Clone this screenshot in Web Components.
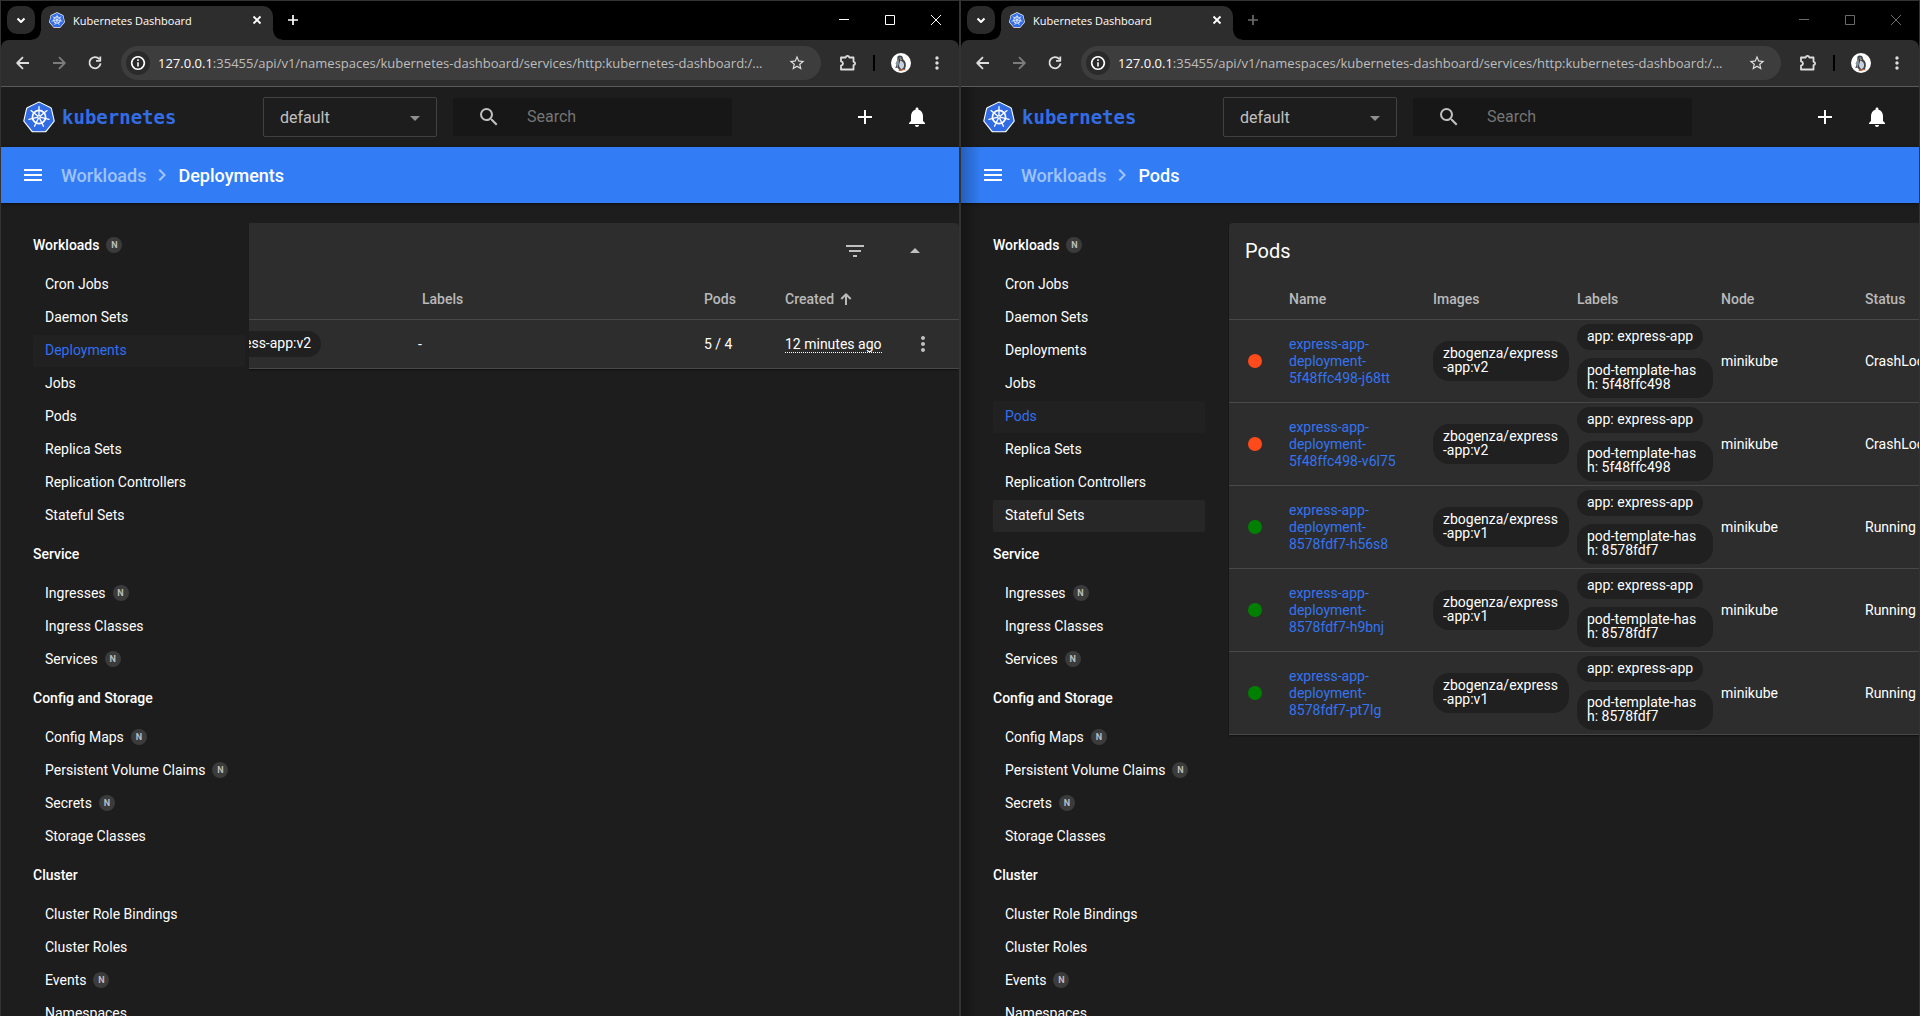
<!DOCTYPE html>
<html lang="en">
<head>
<meta charset="utf-8">
<title>Kubernetes Dashboard</title>
<style>
html, body { margin: 0; height: 100%; }
body { display: flex; overflow: hidden; background: #1d1d1d; font: 14px/20px Roboto, "Liberation Sans", sans-serif; color: #fff; }
browser-window { flex: 1 1 0; min-width: 0; }
</style>
</head>
<body>
<browser-window active>
  <kd-app page="Deployments"></kd-app>
</browser-window>
<browser-window class="behind">
  <kd-app page="Pods" hovered="Stateful Sets"></kd-app>
</browser-window>

<script>
const ICONS = {
  menu: 'M3 18h18v-2H3v2zm0-5h18v-2H3v2zm0-7v2h18V6H3z',
  chevron: 'M10 6L8.59 7.41 13.17 12l-4.58 4.59L10 18l6-6z',
  search: 'M15.5 14h-.79l-.28-.27A6.471 6.471 0 0 0 16 9.5 6.5 6.5 0 1 0 9.5 16c1.61 0 3.09-.59 4.23-1.57l.27.28v.79l5 4.99L20.49 19l-4.99-5zm-6 0C7.01 14 5 11.99 5 9.5S7.01 5 9.5 5 14 7.01 14 9.5 11.99 14 9.5 14z',
  add: 'M19 13h-6v6h-2v-6H5v-2h6V5h2v6h6v2z',
  bell: 'M12 22c1.1 0 2-.9 2-2h-4c0 1.1.89 2 2 2zm6-6v-5c0-3.07-1.64-5.64-4.5-6.32V4c0-.83-.67-1.5-1.5-1.5s-1.500.67-1.500 1.500v.68C7.63 5.360 6 7.920 6 11v5l-2 2v1h16v-1l-2-2z',
  filter: 'M10 18h4v-2h-4v2zM3 6v2h18V6H3zm3 7h12v-2H6v2z',
  up: 'M7 14l5-5 5 5z',
  down: 'M7 10l5 5 5-5z',
  more: 'M12 8c1.1 0 2-.9 2-2s-.9-2-2-2-2 .9-2 2 .9 2 2 2zm0 2c-1.100 0-2 .9-2 2s.9 2 2 2 2-.9 2-2-.9-2-2-2zm0 6c-1.100 0-2 .9-2 2s.9 2 2 2 2-.9 2-2-.9-2-2-2z',
  star: 'M22 9.24l-7.190-.620L12 2 9.190 8.630 2 9.240l5.460 4.730L5.820 21 12 17.270 18.180 21l-1.630-7.030L22 9.240zM12 15.400l-3.760 2.270 1-4.280-3.320-2.880 4.380-.380L12 6.100l1.710 4.040 4.380.380-3.320 2.880 1 4.280L12 15.400z'
};
const STROKES = {
  back: 'M18 12H6.500M12 6.200L6.200 12l5.800 5.800',
  forward: 'M6 12h11.500M12 6.200l5.800 5.800-5.800 5.800',
  reload: 'M16.400 8.200A5.600 5.600 0 1 0 17.600 12.400M17.300 5.500v4.300h-4.300',
  close: 'M8.500 8.500l7 7M15.500 8.500l-7 7',
  plus: 'M12 7v10M7 12h10',
  caret: 'M8.500 10.500l3.500 3.500 3.500-3.500',
  info: 'M12 11.200v4.300M12 8.300v1.700M12 5.700a6.300 6.300 0 1 0 .010 0z',
  puzzle: 'M5 6.500h4.800q.2-1.600 1.700-1.600t1.700 1.600h4.300v4.300q1.600.2 1.600 1.700t-1.600 1.700V18.500H5v-3.800q2-.5 2-2.200T5 10.300z',
  sort: 'M12 18V7.500M7.300 12L12 7.300l4.700 4.700'
};

const define = (name, markup, setup) => {
  const tpl = document.createElement('template');
  tpl.innerHTML = markup;
  customElements.define(name, class extends HTMLElement {
    connectedCallback() {
      if (this.shadowRoot) return;
      this.attachShadow({ mode: 'open' }).append(tpl.content.cloneNode(true));
      if (setup) setup.call(this, this.shadowRoot);
    }
  });
};

define('ui-icon', `
<style>:host { display: inline-flex; flex: none; width: 24px; height: 24px; } svg { width: 100%; height: 100%; display: block; }</style>
<svg viewBox="0 0 24 24" aria-hidden="true"><path/></svg>`, function (root) {
  const n = this.getAttribute('name'), p = root.querySelector('path');
  if (ICONS[n]) { p.setAttribute('d', ICONS[n]); p.setAttribute('fill', 'currentColor'); }
  else {
    p.setAttribute('d', STROKES[n]); p.setAttribute('fill', 'none'); p.setAttribute('stroke', 'currentColor');
    p.setAttribute('stroke-width', this.getAttribute('weight') || 1.8); p.setAttribute('stroke-linejoin', 'round');
  }
});

define('kube-logo', `
<style>:host { display: inline-flex; flex: none; width: 32px; height: 32px; } svg { width: 100%; height: 100%; }</style>
<svg viewBox="-16 -16 32 32" aria-hidden="true">
  <polygon class="edge" fill="#fff" stroke="#fff" stroke-width="3" stroke-linejoin="round"/>
  <polygon class="body" fill="#326ce5" stroke="#326ce5" stroke-width="3" stroke-linejoin="round"/>
  <circle r="6.600" fill="none" stroke="#fff" stroke-width="1.700"/>
  <g class="spokes" stroke="#fff" stroke-width="1.300" stroke-linecap="round"></g>
  <circle r="1.900" fill="#fff"/><circle r=".8" fill="#326ce5"/>
</svg>`, function (root) {
  const pt = (r, k) => { const a = k * 2 * Math.PI / 7 - Math.PI / 2; return [(r * Math.cos(a)).toFixed(2), (r * Math.sin(a) + .6).toFixed(2)]; };
  const poly = r => [0, 1, 2, 3, 4, 5, 6].map(k => pt(r, k).join()).join(' ');
  root.querySelector('.edge').setAttribute('points', poly(14.6));
  root.querySelector('.body').setAttribute('points', poly(13.4));
  root.querySelector('.spokes').innerHTML = [0, 1, 2, 3, 4, 5, 6].map(k => {
    const a = pt(2, k), b = pt(10.3, k);
    return `<path d="M${a[0]} ${a[1] - .6}L${b[0]} ${b[1] - .6}"/>`;
  }).join('');
});

define('user-avatar', `
<style>:host { display: inline-flex; width: 20px; height: 20px; } svg { width: 100%; height: 100%; }</style>
<svg viewBox="0 0 20 20" aria-hidden="true">
  <circle cx="10" cy="10" r="10" fill="#fff"/>
  <path d="M6.500 3.500q2.500-2 5 .2l.8 2.800q3 2 2.500 6.500l-1 4H8.500l-2.200-2.500-2 .8 1.400-4.800z" fill="#3f454c"/>
  <path d="M9.300 7.500q3.400 1 3.800 4.300.2 3.400-2.800 4.400-2.600-1.500-2.300-4.500z" fill="#c9d1da"/>
  <path d="M4.600 10.500L7.200 4.500l.8 5.500-1.600 5z" fill="#8b949d"/>
  <path d="M8.400 5.400l3 .4-1.500 1.500z" fill="#f0a02b"/><circle cx="9.200" cy="4.800" r=".8" fill="#58a6e8"/>
  <path d="M8 16.500h3l.5 1.500H7.500zM11.500 16h2.500l.6 1.300h-3z" fill="#c9693a"/>
</svg>`);

define('browser-tabs', `
<style>
:host { display: flex; align-items: flex-start; height: 39px; background: #000; color: #fff; font: 11px/16px "Open Sans", "Noto Sans", sans-serif; }
button { display: flex; align-items: center; justify-content: center; padding: 0; border: 0; background: none; color: inherit; }
.list { width: 28px; height: 28px; margin: 5px 6px 0; border-radius: 10px; background: #2b2b2b; }
.tab { position: relative; display: flex; align-items: center; gap: 8px; box-sizing: border-box; flex: 0 1 232px; height: 34px; margin-top: 5px; padding: 0 4px 6px 8px; border-radius: 10px 10px 0 0; background: #2d2d2d; }
.tab::before, .tab::after { content: ""; position: absolute; bottom: 0; width: 9px; height: 9px; }
.tab::before { left: -9px; background: radial-gradient(circle at 0 0, transparent 8px, #2d2d2d 9px); }
.tab::after { right: -9px; background: radial-gradient(circle at 100% 0, transparent 8px, #2d2d2d 9px); }
.tab span { flex: 1; padding-top: 2px; white-space: nowrap; }
kube-logo { width: 16px; height: 16px; }
.new { width: 24px; height: 24px; margin: 7px 0 0 8px; }
.controls { display: flex; margin-left: auto; }
.controls button { width: 46px; height: 38px; }
.controls svg { width: 10px; height: 10px; fill: none; stroke: currentColor; }
.dim { color: #6b6b6b; }
</style>
<button class="list" aria-label="Search tabs"><ui-icon name="caret" weight="2"></ui-icon></button>
<div class="tab"><kube-logo></kube-logo><span>Kubernetes Dashboard</span><button aria-label="Close tab"><ui-icon name="close" weight="1.800"></ui-icon></button></div>
<button class="new" aria-label="New tab"><ui-icon name="plus" weight="1.700"></ui-icon></button>
<div class="controls">
  <button aria-label="Minimize"><svg viewBox="0 0 10 10"><path d="M0 4.500h10"/></svg></button>
  <button aria-label="Maximize"><svg viewBox="0 0 10 10"><path d="M.5.5h9v9h-9z"/></svg></button>
  <button aria-label="Close"><svg viewBox="0 0 10 10"><path d="M0 0l10 10M10 0L0 10"/></svg></button>
</div>`, function (root) {
  if (!this.hasAttribute('active')) { root.querySelector('.new').classList.add('dim'); root.querySelector('.controls').classList.add('dim'); }
});

define('browser-toolbar', `
<style>
:host { display: block; background: #000; }
.bar { display: flex; align-items: center; box-sizing: border-box; height: 47px; padding: 0 10px; border-bottom: 1px solid #5a5a5a; border-radius: 8px 8px 0 0; background: #2d2d2d; color: #dedede; }
button { display: flex; flex: none; align-items: center; justify-content: center; width: 24px; height: 24px; padding: 0; border: 0; border-radius: 12px; background: none; color: inherit; }
.nav { display: flex; gap: 12px; margin-right: 14px; }
.nav button:nth-child(2) { color: #7c7c7c; }
.omni { display: flex; align-items: center; flex: 1; min-width: 0; height: 34px; padding: 0 12px 0 5px; border-radius: 17px; background: #3d3d3d; }
.omni .info { background: #2a2a2a; color: #fff; }
.url { flex: 1; min-width: 0; margin: 0 8px; overflow: hidden; white-space: nowrap; text-overflow: ellipsis; color: #bdbdbd; font: 13px/20px "Open Sans", "Noto Sans", sans-serif; }
.url b { color: #fff; font-weight: 400; }
.omni ui-icon[name=star] { width: 18px; height: 18px; }
.tools { display: flex; align-items: center; }
.ext { margin-left: 15px; }
.sep { width: 2px; height: 16px; margin: 0 16px 0 13px; background: #000; }
.more { margin-left: 14px; }
.more ui-icon { width: 20px; height: 20px; }
</style>
<div class="bar">
  <div class="nav">
    <button aria-label="Back"><ui-icon name="back"></ui-icon></button>
    <button aria-label="Forward"><ui-icon name="forward"></ui-icon></button>
    <button aria-label="Reload"><ui-icon name="reload"></ui-icon></button>
  </div>
  <div class="omni">
    <button class="info" aria-label="Site information"><ui-icon name="info" weight="1.600"></ui-icon></button>
    <div class="url"><b>127.0.0.1</b>:35455/api/v1/namespaces/kubernetes-dashboard/services/http:kubernetes-dashboard:/...</div>
    <button aria-label="Bookmark"><ui-icon name="star"></ui-icon></button>
  </div>
  <div class="tools">
    <button class="ext" aria-label="Extensions"><ui-icon name="puzzle"></ui-icon></button>
    <span class="sep"></span>
    <user-avatar></user-avatar>
    <button class="more" aria-label="Browser menu"><ui-icon name="more"></ui-icon></button>
  </div>
</div>`);

define('browser-window', `
<style>
:host { position: relative; display: flex; flex-direction: column; box-sizing: border-box; height: 100%; border: 1px solid #333; border-bottom: 0; background: #1d1d1d; overflow: hidden; }
:host(.behind)::after { content: ""; position: absolute; inset: 86px auto 0 0; width: 20px; background: linear-gradient(90deg, rgba(0,0,0,.24), transparent); pointer-events: none; }
::slotted(*) { flex: 1; min-height: 0; }
</style>
<browser-tabs></browser-tabs>
<browser-toolbar></browser-toolbar>
<slot></slot>`, function (root) {
  if (this.hasAttribute('active')) {
    const t = document.createElement('browser-tabs');
    t.setAttribute('active', '');
    root.querySelector('browser-tabs').replaceWith(t);
  }
});

define('kd-header', `
<style>
:host { display: flex; align-items: center; height: 60px; padding: 0 30px 0 22px; color: #fff; }
.brand { display: flex; align-items: center; gap: 7px; flex: 0 0 240px; color: #326de6; font: 700 19px/24px "DejaVu Sans Mono", monospace; text-decoration: none; }
.ns { display: flex; align-items: center; box-sizing: border-box; flex: 0 0 174px; height: 40px; border: 1px solid #414141; border-radius: 2px; color: #8f8f8f; }
.ns select { flex: 1; height: 38px; margin: 0 -36px 0 0; padding: 2px 36px 0 16px; appearance: none; border: 0; background: none; color: #c0c0c0; font: 16px/20px Roboto, sans-serif; }
.ns ui-icon { margin: 2px 9px 0 auto; pointer-events: none; }
.search { display: flex; align-items: center; flex: 0 1 279px; min-width: 0; box-sizing: border-box; height: 38px; margin-left: 16px; padding: 0 16px 0 24px; gap: 26px; border-radius: 2px; background: #171717; color: #c0c0c0; }
.search input { flex: 1; min-width: 0; padding: 0; border: 0; background: none; color: #fff; font: 16px/20px Roboto, sans-serif; }
.search input::placeholder { color: #757575; opacity: 1; }
.actions { display: flex; gap: 28px; margin-left: auto; }
button { display: flex; padding: 0; border: 0; background: none; color: inherit; }
</style>
<a class="brand" href="#"><kube-logo></kube-logo><span>kubernetes</span></a>
<div class="ns"><select aria-label="Namespace"><option>default</option></select><ui-icon name="down"></ui-icon></div>
<label class="search"><ui-icon name="search"></ui-icon><input type="text" placeholder="Search" aria-label="Search"></label>
<div class="actions">
  <button aria-label="Create"><ui-icon name="add"></ui-icon></button>
  <button aria-label="Notifications"><ui-icon name="bell"></ui-icon></button>
</div>`);

define('kd-breadcrumb', `
<style>
:host { display: flex; align-items: center; height: 56px; padding: 0 20px; gap: 4px; background: #327df5; box-shadow: 0 1px 3px rgba(0,0,0,.5); font: 500 18px/24px Roboto, sans-serif; }
button { display: flex; margin-right: 12px; padding: 0; border: 0; background: none; color: #fff; }
a, span { padding-top: 2px; }
a, ui-icon[name=chevron] { color: rgba(255,255,255,.55); text-decoration: none; }
</style>
<button aria-label="Toggle navigation"><ui-icon name="menu"></ui-icon></button>
<a href="#">Workloads</a><ui-icon name="chevron"></ui-icon><span><slot></slot></span>`);

define('kd-badge', `
<style>:host { display: inline-flex; align-items: center; justify-content: center; flex: none; width: 16px; height: 16px; margin-left: 7px; border-radius: 8px; background: #3b3b3b; color: #bdbdbd; font: 700 9px/16px Roboto, sans-serif; }</style>
<slot></slot>`);

const NAV = [
  ['Workloads*', ['Cron Jobs', 'Daemon Sets', 'Deployments', 'Jobs', 'Pods', 'Replica Sets', 'Replication Controllers', 'Stateful Sets']],
  ['Service', ['Ingresses*', 'Ingress Classes', 'Services*']],
  ['Config and Storage', ['Config Maps*', 'Persistent Volume Claims*', 'Secrets*', 'Storage Classes']],
  ['Cluster', ['Cluster Role Bindings', 'Cluster Roles', 'Events*', 'Namespaces']]
];

define('kd-nav', `
<style>
:host { display: block; box-sizing: border-box; flex: 0 0 248px; padding: 0 4px 0 32px; overflow: hidden; background: #1d1d1d; }
h2 { display: flex; align-items: center; box-sizing: border-box; height: 46px; margin: 0; padding-bottom: 2px; font: 500 14px/20px Roboto, sans-serif; }
ul { display: flex; flex-direction: column; gap: 1px; margin: 0; padding: 0; list-style: none; }
a { display: flex; align-items: center; box-sizing: border-box; height: 32px; padding: 0 12px 2px; border-radius: 2px; color: #fff; text-decoration: none; white-space: nowrap; }
a.on { background: #212121; color: #326ff0; }
a.hover { background: #272727; }
</style><nav></nav>`, function (root) {
  const label = t => t.replace('*', '') + (t.endsWith('*') ? '<kd-badge>N</kd-badge>' : '');
  const cls = t => t === this.getAttribute('current') ? 'on' : t === this.getAttribute('hovered') ? 'hover' : '';
  root.querySelector('nav').innerHTML = NAV.map(([title, items]) =>
    `<h2>${label(title)}</h2><ul>${items.map(i => `<li><a href="#" class="${cls(i)}">${label(i)}</a></li>`).join('')}</ul>`).join('');
});

define('kd-chip', `
<style>
:host { display: flex; width: fit-content; max-width: 136px; box-sizing: border-box; padding: 5px 10px 7px; border-radius: 16px; background: #202020; line-height: 14px; word-break: break-all; }
:host([wide]) { max-width: none; }
</style><slot></slot>`);

define('kd-card', `
<style>
:host { display: block; flex: none; margin-left: 20px; border-radius: 4px 4px 0 0; background: #2d2d2d; box-shadow: 0 1px 2px rgba(0,0,0,.5); }
.head { display: flex; align-items: center; height: 56px; padding: 0 32px 0 16px; font: 20px/24px Roboto, sans-serif; }
.tools { display: flex; gap: 36px; margin-left: auto; color: #c0c0c0; }
button { display: flex; padding: 0; border: 0; background: none; color: inherit; }
</style>
<div class="head"><slot name="title"></slot><div class="tools">
  <button aria-label="Filter"><ui-icon name="filter"></ui-icon></button>
  <button aria-label="Collapse"><ui-icon name="up"></ui-icon></button>
</div></div>
<slot></slot>`);

const TABLE_CSS = `
:host { display: block; }
table { table-layout: fixed; border-collapse: separate; border-spacing: 0; width: 100%; }
th, td { padding: 0; text-align: left; border-bottom: 1px solid #484848; white-space: nowrap; }
th { height: 40px; color: #b9b9b9; font-weight: 500; }
button { display: flex; padding: 0; border: 0; background: none; color: #c0c0c0; }`;

define('kd-deployment-table', `
<style>${TABLE_CSS}
:host { width: 818px; }
td { height: 48px; }
.labels { padding-left: 4px; }
.created { display: flex; align-items: center; }
time { display: inline-block; line-height: 16px; border-bottom: 1px dotted #fff; }
button { margin-left: 6px; }
</style>
<table>
  <colgroup><col style="width:277px"><col style="width:286px"><col style="width:81px"><col style="width:120px"><col></colgroup>
  <thead><tr><th></th><th class="labels">Labels</th><th>Pods</th><th><div class="created">Created<ui-icon name="sort" weight="2"></ui-icon></div></th><th></th></tr></thead>
  <tbody><tr><td><kd-chip wide>zbogenza/express-app:v2</kd-chip></td><td>-</td><td>5 / 4</td><td><time>12 minutes ago</time></td><td><button aria-label="Actions"><ui-icon name="more"></ui-icon></button></td></tr></tbody>
</table>`);

const PODS = [
  ['5f48ffc498', 'j68tt', 'v2', 'CrashLoopBackOff'],
  ['5f48ffc498', 'v6l75', 'v2', 'CrashLoopBackOff'],
  ['8578fdf7', 'h56s8', 'v1', 'Running'],
  ['8578fdf7', 'h9bnj', 'v1', 'Running'],
  ['8578fdf7', 'pt7lg', 'v1', 'Running']
];

define('kd-pod-table', `
<style>${TABLE_CSS}
:host { width: 960px; }
td { height: 82px; }
col { width: 144px; }
col.status { width: 60px; }
col.rest { width: auto; }
td a { display: block; width: 112px; color: #3474f0; line-height: 17px; text-decoration: none; white-space: normal; }
td kd-chip { white-space: normal; }
kd-chip + kd-chip { margin-top: 8px; }
.dot { display: block; width: 14px; height: 14px; margin-left: 19px; border-radius: 7px; background: #008000; }
.dot.bad { background: #ff4a1c; }
</style>
<table>
  <colgroup><col class="status"><col><col><col><col><col class="rest"></colgroup>
  <thead><tr><th></th><th>Name</th><th>Images</th><th>Labels</th><th>Node</th><th>Status</th></tr></thead>
  <tbody></tbody>
</table>`, function (root) {
  root.querySelector('tbody').innerHTML = PODS.map(([hash, id, tag, status]) => `<tr>
    <td><span class="dot ${status === 'Running' ? '' : 'bad'}"></span></td>
    <td><a href="#">express-app-deployment-${hash}-${id}</a></td>
    <td><kd-chip>zbogenza/express-app:${tag}</kd-chip></td>
    <td><kd-chip>app: express-app</kd-chip><kd-chip>pod-template-hash: ${hash}</kd-chip></td>
    <td>minikube</td><td>${status}</td></tr>`).join('');
});

define('kd-app', `
<style>
:host { display: flex; flex-direction: column; overflow: hidden; }
.body { display: flex; flex: 1; min-height: 0; padding-top: 20px; overflow: hidden; }
main { display: flex; align-items: flex-start; flex: 1; min-width: 0; overflow: hidden; }
main.end { justify-content: flex-end; }
</style>
<kd-header></kd-header>
<kd-breadcrumb></kd-breadcrumb>
<div class="body"></div>`, function (root) {
  const page = this.getAttribute('page');
  root.querySelector('kd-breadcrumb').textContent = page;
  const deployments = page === 'Deployments';
  root.querySelector('.body').innerHTML = `
    <kd-nav current="${page}" hovered="${this.getAttribute('hovered') || ''}"></kd-nav>
    <main class="${deployments ? 'end' : ''}"><kd-card>${deployments
      ? '<kd-deployment-table></kd-deployment-table>'
      : '<span slot="title">Pods</span><kd-pod-table></kd-pod-table>'}</kd-card></main>`;
});
</script>
</body>
</html>
